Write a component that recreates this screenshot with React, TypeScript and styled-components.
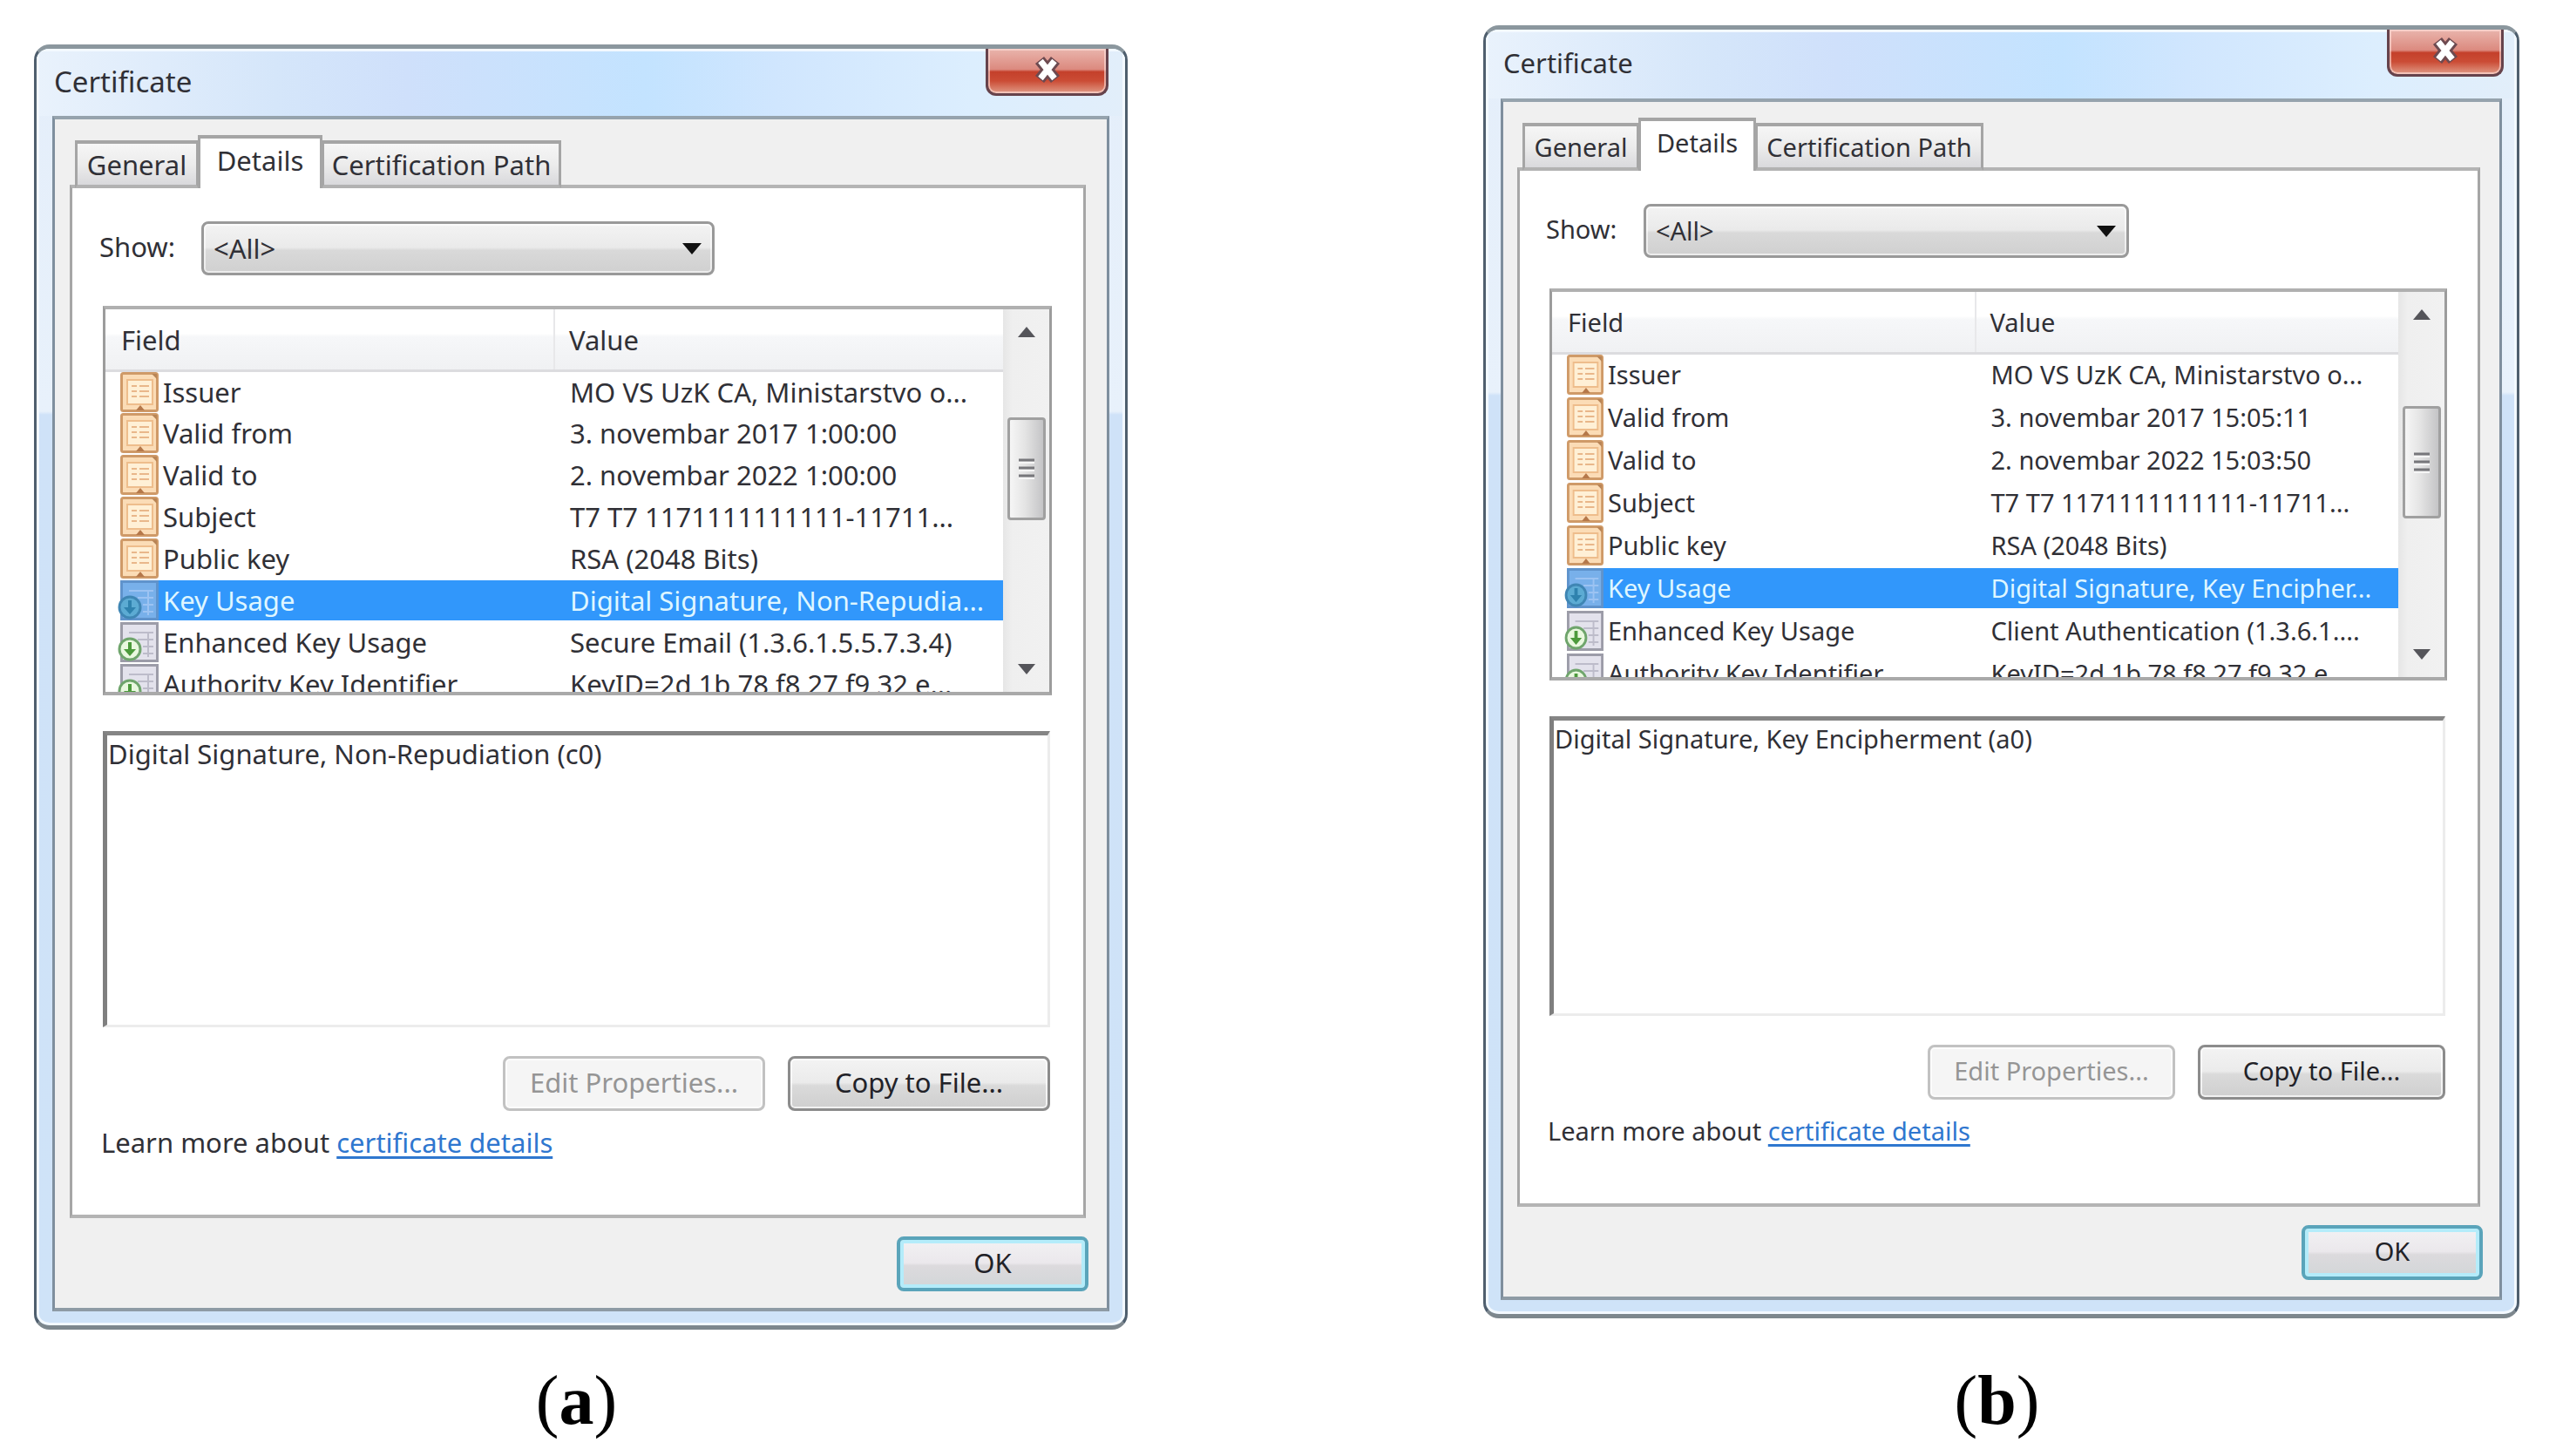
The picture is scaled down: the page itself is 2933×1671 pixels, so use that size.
import React from "react";
import styled, { createGlobalStyle, css, ThemeProvider } from "styled-components";

const regular = {
  title: 33,
  text: 31,
  row: 48,
  icon: 44,
  titleBar: "77px",
  titleBarSides: "19px",
  frameSide: "18px",
  clientPadding: "18px 24px 19px 17px",
  pagePadding: "38px 38px 61px 31px",
  label: 117,
  listHeight: 447,
  noteHeight: 340,
  button: 301,
  ok: 220,
  close: 141,
  tabs: [142, 143, 275],
  thumbTop: 75,
  thumbHeight: 118,
};

const compact: typeof regular = {
  title: 31,
  text: 29,
  row: 49,
  icon: 42,
  titleBar: "79px",
  titleBarSides: "15px",
  frameSide: "17px",
  clientPadding: "18px 22px 19px 16px",
  pagePadding: "38px 37px 61px 30px",
  label: 112,
  listHeight: 450,
  noteHeight: 344,
  button: 284,
  ok: 208,
  close: 134,
  tabs: [134, 135, 262],
  thumbTop: 82,
  thumbHeight: 129,
};

const GlobalStyle = createGlobalStyle`
  *, *::before, *::after { box-sizing: border-box; }
  body {
    margin: 0;
    background: #fff;
    color: #303036;
    font-family: "Noto Sans", "Open Sans", sans-serif;
  }
  button, select, textarea { font: inherit; color: inherit; margin: 0; }
`;

const Page = styled.main`
  display: grid;
  grid-template-columns: minmax(0, 1255fr) minmax(0, 1189fr);
  column-gap: 408px;
  padding: 29px 42px 0 39px;
`;

const Figure = styled.figure<{ $drop: number }>`
  display: flex;
  flex-direction: column;
  margin: 0;
  padding-top: ${(p) => p.$drop}px;
`;

const Caption = styled.figcaption`
  margin-top: auto;
  padding: 35px 10px 0 0;
  color: #000;
  font-family: "Liberation Serif", serif;
  font-size: 80px;
  line-height: 92px;
  text-align: center;
`;

const Frame = styled.section`
  padding: 0 ${(p) => p.theme.frameSide} 16px;
  border: solid;
  border-width: 5px 3px;
  border-color: #8b979e #4f5f6e #7d878d;
  border-radius: 18px;
  background: linear-gradient(#e4eefa 0, #e8f1fb 416px, #cfe2f8 420px, #cfe3f8 100%);
  box-shadow: inset 0 0 0 3px #f3f9ff;
  font-size: ${(p) => p.theme.text}px;
  line-height: 40px;
  overflow: hidden;
`;

const TitleBar = styled.header`
  display: flex;
  align-items: flex-start;
  justify-content: space-between;
  height: ${(p) => p.theme.titleBar};
  margin: 0 -${(p) => p.theme.frameSide};
  padding: 0 ${(p) => p.theme.titleBarSides} 0 20px;
  background: linear-gradient(90deg, #e9f2fc 0, #d5e6fa 22%, #cfe0fb 34%, #c3e3ff 56%, #d0e6fe 68%, #dceefe 86%, #e2eefa 100%);
  box-shadow: inset 3px 3px 0 #f3f9ff, inset -3px 0 0 #f3f9ff;
`;

const Title = styled.h2`
  margin: 0;
  font-size: ${(p) => p.theme.title}px;
  font-weight: 400;
  line-height: 76px;
`;

const CloseButton = styled.button`
  display: grid;
  place-items: center;
  width: ${(p) => p.theme.close}px;
  height: 54px;
  padding: 0 0 4px;
  border: 3px solid #66434c;
  border-top: 0;
  border-radius: 0 0 12px 12px;
  background: linear-gradient(#e9b5ad 0, #dc8a7f 46%, #c4402b 52%, #cb4c35 72%, #e09a86 100%);
  box-shadow: inset 0 0 0 2px rgba(255, 225, 220, 0.6);
`;

const Client = styled.div`
  padding: ${(p) => p.theme.clientPadding};
  border: solid #7f8f9e;
  border-width: 4px 3px;
  border-top-color: #96a3ad;
  border-bottom-color: #8e9ba5;
  background: #f0f0f0;
`;

const TabStrip = styled.div`
  display: flex;
  align-items: flex-end;
  margin-bottom: -4px;
  padding-left: 6px;
`;

const Tab = styled.button<{ $slot: number; $selected?: boolean }>`
  width: ${(p) => p.theme.tabs[p.$slot]}px;
  padding: 0;
  border: solid #a5a5a5;
  border-width: 4px 3px;
  white-space: nowrap;
  ${(p) =>
    p.$selected
      ? css`
          position: relative;
          height: 61px;
          padding-bottom: 8px;
          border-bottom: 0;
          background: #fff;
        `
      : css`
          height: 55px;
          border-bottom-color: #b2b2b2;
          background: linear-gradient(#f6f6f6, #ececec 50%, #d9d9dc);
        `}
  & + & { margin-left: -1px; }
`;

const TabPage = styled.div`
  padding: ${(p) => p.theme.pagePadding};
  border: solid #a6a6a6;
  border-width: 4px 3px;
  border-top-color: #b4b4b4;
  border-bottom-color: #b4b4b4;
  background: #fff;
`;

const ShowRow = styled.div`
  display: flex;
  align-items: center;
  margin-bottom: 35px;
`;

const ShowLabel = styled.label`
  flex: none;
  width: ${(p) => p.theme.label}px;
  padding-bottom: 4px;
`;

const SelectBox = styled.div`
  position: relative;
  width: 54%;
`;

const Select = styled.select`
  appearance: none;
  display: block;
  width: 100%;
  height: 62px;
  padding: 0 48px 0 11px;
  border: 3px solid #999;
  border-radius: 8px;
  background: linear-gradient(#f3f3f3 0, #eaeaea 48%, #d9d9d9 54%, #d0d0d0 100%);
  box-shadow: inset 0 0 0 2px rgba(255, 255, 255, 0.6);
`;

const SelectArrow = styled.svg`
  position: absolute;
  top: 25px;
  right: 15px;
  width: 22px;
  height: 13px;
  pointer-events: none;
`;

const List = styled.div`
  display: flex;
  height: ${(p) => p.theme.listHeight}px;
  margin-right: -2px;
  margin-left: 4px;
  border: solid #9c9c9c;
  border-width: 4px 3px;
  border-top-color: #b0b0b0;
  border-bottom-color: #a9a9a9;
  overflow: hidden;
`;

const Table = styled.table`
  flex: 1;
  width: 0;
  height: max-content;
  table-layout: fixed;
  border-collapse: collapse;
`;

const HeadCell = styled.th`
  height: 70px;
  padding: 2px 18px 0;
  border-bottom: 3px solid #dcdcdf;
  background: linear-gradient(#fff 0, #fff 40%, #f6f7f9 46%, #f0f1f3 100%);
  font-weight: 400;
  text-align: left;
  & + & {
    border-left: 2px solid #e8e8ea;
    padding-left: 16px;
  }
`;

const fill = css<{ $selected?: boolean }>`
  height: 46px;
  line-height: 46px;
  white-space: nowrap;
  overflow: hidden;
  ${(p) =>
    p.$selected &&
    css`
      background: #3197fb;
      color: #dff6ff;
    `}
`;

const FieldCell = styled.td`
  height: ${(p) => p.theme.row}px;
  padding: 0;
`;

const FieldInner = styled.div`
  display: flex;
  align-items: center;
  padding-left: 17px;
`;

const FieldName = styled.span<{ $selected?: boolean }>`
  ${fill}
  flex: 1;
  padding-left: 5px;
`;

const ValueCell = styled.td`
  padding: 0;
`;

const ValueText = styled.div<{ $selected?: boolean }>`
  ${fill}
  padding-left: 18px;
`;

const RowIcon = styled.svg`
  flex: none;
  width: ${(p) => p.theme.icon}px;
  height: 46px;
  overflow: visible;
`;

const ScrollBar = styled.div`
  display: flex;
  flex-direction: column;
  align-items: center;
  width: 53px;
  padding: 3px 0;
  background: linear-gradient(90deg, #e6e6e6, #efefef 20%, #f1f1f1);
`;

const ScrollButton = styled.button`
  display: grid;
  place-items: center;
  width: 44px;
  height: 46px;
  padding: 0;
  border: 0;
  background: none;
`;

const Thumb = styled.div`
  display: grid;
  place-items: center;
  width: 44px;
  height: ${(p) => p.theme.thumbHeight}px;
  margin-top: ${(p) => p.theme.thumbTop}px;
  margin-bottom: auto;
  border: 3px solid #a0a0a0;
  border-radius: 4px;
  background: linear-gradient(90deg, #f6f6f6, #e4e4e4 45%, #c4c4c6);
`;

const Note = styled.textarea`
  display: block;
  width: calc(100% - 4px);
  height: ${(p) => p.theme.noteHeight}px;
  margin: 41px 0 33px 4px;
  padding: 1px;
  border: solid;
  border-width: 5px 3px 3px 5px;
  border-color: #858585 #ececec #ececec #7f7f7f;
  border-radius: 0;
  background: #fff;
  resize: none;
  outline: 0;
  overflow: hidden;
`;

const ButtonRow = styled.div`
  display: flex;
  justify-content: flex-end;
  gap: 26px;
`;

const PushButton = styled.button`
  width: ${(p) => p.theme.button}px;
  height: 63px;
  padding: 0 0 4px;
  border: 3px solid #8c8c8c;
  border-radius: 8px;
  background: linear-gradient(#f3f3f3 0, #ebebeb 48%, #dadada 54%, #cfcfcf 100%);
  box-shadow: inset 0 0 0 2px rgba(255, 255, 255, 0.7);
  color: #222228;
  white-space: nowrap;
  &:disabled {
    border-color: #c2c2c2;
    background: #f5f5f5;
    color: #959595;
  }
`;

const OkButton = styled(PushButton)`
  width: ${(p) => p.theme.ok}px;
  border: 4px solid #5aa4ba;
  background: linear-gradient(#f2f1f3 0, #ebe8ec 48%, #dcdadd 54%, #d2d6d8 100%);
  box-shadow: inset 0 0 0 4px #b4ecfa;
`;

const Footer = styled.div`
  display: flex;
  justify-content: flex-end;
  margin: 21px -3px 0 0;
`;

const LearnMore = styled.p`
  margin: 0;
  padding: 16px 0 2px 2px;
`;

const Link = styled.a`
  color: #2f77cf;
  text-decoration: underline;
  text-decoration-thickness: 3px;
  text-underline-offset: 4px;
`;

const CloseMark = () => (
  <svg width="34" height="32" viewBox="0 0 34 32" fill="none" aria-hidden="true">
    <path d="M8 5l18 22M26 5L8 27" stroke="#6d4a50" strokeWidth="13" />
    <path d="M9 6l16 20M25 6L9 26" stroke="#fff" strokeWidth="7" />
  </svg>
);

const ScrollArrow = ({ down }: { down?: boolean }) => (
  <svg width="20" height="12" viewBox="0 0 20 12" aria-hidden="true">
    <path d={down ? "M0 0h20L10 12z" : "M10 0l10 12H0z"} fill="#55555a" />
  </svg>
);

const Grip = () => (
  <svg width="18" height="24" viewBox="0 0 18 24" aria-hidden="true">
    <path d="M0 2h18M0 11h18M0 20h18" stroke="#77777b" strokeWidth="3" />
    <path d="M0 5h18M0 14h18M0 23h18" stroke="#f6f6f6" strokeWidth="2" />
  </svg>
);

const CertificateIcon = () => (
  <RowIcon viewBox="0 0 44 46" preserveAspectRatio="none" aria-hidden="true">
    <rect x="1.5" y="1.5" width="41" height="43" rx="2" fill="#fbdcb6" stroke="#cf9a68" strokeWidth="3" />
    <path d="M36 2h6v6z" fill="#b98556" />
    <rect x="8" y="9" width="29" height="28" fill="#fff0d6" stroke="#eebd8c" strokeWidth="2" />
    <path d="M13 16h6M22 16h11M13 22h6M22 22h11M13 28h6M22 28h11" stroke="#e9b78a" strokeWidth="2" />
    <path d="M18 44l5-6 5 6z" fill="#b5784a" />
  </RowIcon>
);

const ExtensionIcon = ({ selected }: { selected?: boolean }) => (
  <RowIcon viewBox="0 0 44 46" preserveAspectRatio="none" aria-hidden="true">
    <rect
      x="1.5"
      y="1.5"
      width="41"
      height="43"
      fill={selected ? "#78b0ea" : "#e3e2ec"}
      stroke={selected ? "#5f93cc" : "#9c9ca8"}
      strokeWidth="3"
    />
    <path
      d="M10 12h28M20 20h18M26 28h12M26 36h12M32 12v28"
      stroke={selected ? "#9cc3f2" : "#bdbcca"}
      strokeWidth="2"
    />
    <circle
      cx="11"
      cy="31"
      r="12"
      fill={selected ? "#5cabd3" : "#e9f8df"}
      stroke={selected ? "#3f86b4" : "#6fa56c"}
      strokeWidth="3"
    />
    <path d="M9 23h4v8h5l-7 8-7-8h5z" fill={selected ? "#2f82ae" : "#4c9a3c"} />
  </RowIcon>
);

type Entry = { name: string; value: string; kind: "basic" | "extension"; selected?: boolean };

type Certificate = {
  id: string;
  theme: typeof regular;
  drop: number;
  note: string;
  entries: Entry[];
};

const certificates: Certificate[] = [
  {
    id: "a",
    theme: regular,
    drop: 22,
    note: "Digital Signature, Non-Repudiation (c0)",
    entries: [
      { name: "Issuer", value: "MO VS UzK CA, Ministarstvo o...", kind: "basic" },
      { name: "Valid from", value: "3. novembar 2017 1:00:00", kind: "basic" },
      { name: "Valid to", value: "2. novembar 2022 1:00:00", kind: "basic" },
      { name: "Subject", value: "T7 T7 1171111111111-11711...", kind: "basic" },
      { name: "Public key", value: "RSA (2048 Bits)", kind: "basic" },
      { name: "Key Usage", value: "Digital Signature, Non-Repudia...", kind: "extension", selected: true },
      { name: "Enhanced Key Usage", value: "Secure Email (1.3.6.1.5.5.7.3.4)", kind: "extension" },
      { name: "Authority Key Identifier", value: "KeyID=2d 1b 78 f8 27 f9 32 e...", kind: "extension" },
    ],
  },
  {
    id: "b",
    theme: compact,
    drop: 0,
    note: "Digital Signature, Key Encipherment (a0)",
    entries: [
      { name: "Issuer", value: "MO VS UzK CA, Ministarstvo o...", kind: "basic" },
      { name: "Valid from", value: "3. novembar 2017 15:05:11", kind: "basic" },
      { name: "Valid to", value: "2. novembar 2022 15:03:50", kind: "basic" },
      { name: "Subject", value: "T7 T7 1171111111111-11711...", kind: "basic" },
      { name: "Public key", value: "RSA (2048 Bits)", kind: "basic" },
      { name: "Key Usage", value: "Digital Signature, Key Encipher...", kind: "extension", selected: true },
      { name: "Enhanced Key Usage", value: "Client Authentication (1.3.6.1....", kind: "extension" },
      { name: "Authority Key Identifier", value: "KeyID=2d 1b 78 f8 27 f9 32 e...", kind: "extension" },
    ],
  },
];

const FieldList = ({ entries }: { entries: Entry[] }) => (
  <List>
    <Table>
      <thead>
        <tr>
          <HeadCell scope="col">Field</HeadCell>
          <HeadCell scope="col">Value</HeadCell>
        </tr>
      </thead>
      <tbody>
        {entries.map((entry) => (
          <tr key={entry.name}>
            <FieldCell>
              <FieldInner>
                {entry.kind === "basic" ? <CertificateIcon /> : <ExtensionIcon selected={entry.selected} />}
                <FieldName $selected={entry.selected}>{entry.name}</FieldName>
              </FieldInner>
            </FieldCell>
            <ValueCell>
              <ValueText $selected={entry.selected}>{entry.value}</ValueText>
            </ValueCell>
          </tr>
        ))}
      </tbody>
    </Table>
    <ScrollBar>
      <ScrollButton type="button" aria-label="Scroll up">
        <ScrollArrow />
      </ScrollButton>
      <Thumb>
        <Grip />
      </Thumb>
      <ScrollButton type="button" aria-label="Scroll down">
        <ScrollArrow down />
      </ScrollButton>
    </ScrollBar>
  </List>
);

const CertificateDialog = ({ id, note, entries }: Pick<Certificate, "id" | "note" | "entries">) => (
  <Frame aria-labelledby={`title-${id}`}>
    <TitleBar>
      <Title id={`title-${id}`}>Certificate</Title>
      <CloseButton type="button" aria-label="Close">
        <CloseMark />
      </CloseButton>
    </TitleBar>
    <Client>
      <TabStrip role="tablist">
        <Tab type="button" role="tab" $slot={0}>General</Tab>
        <Tab type="button" role="tab" aria-selected="true" $slot={1} $selected>Details</Tab>
        <Tab type="button" role="tab" $slot={2}>Certification Path</Tab>
      </TabStrip>
      <TabPage role="tabpanel">
        <ShowRow>
          <ShowLabel htmlFor={`show-${id}`}>Show:</ShowLabel>
          <SelectBox>
            <Select id={`show-${id}`}>
              <option>&lt;All&gt;</option>
            </Select>
            <SelectArrow viewBox="0 0 22 13" aria-hidden="true">
              <path d="M0 0h22L11 13z" fill="#111" />
            </SelectArrow>
          </SelectBox>
        </ShowRow>
        <FieldList entries={entries} />
        <Note aria-label="Field value" readOnly value={note} />
        <ButtonRow>
          <PushButton type="button" disabled>Edit Properties...</PushButton>
          <PushButton type="button">Copy to File...</PushButton>
        </ButtonRow>
        <LearnMore>
          Learn more about <Link href="#details">certificate details</Link>
        </LearnMore>
      </TabPage>
      <Footer>
        <OkButton type="button">OK</OkButton>
      </Footer>
    </Client>
  </Frame>
);

export default function App() {
  return (
    <>
      <GlobalStyle />
      <Page>
        {certificates.map(({ id, theme, drop, note, entries }) => (
          <ThemeProvider theme={theme} key={id}>
            <Figure $drop={drop}>
              <CertificateDialog id={id} note={note} entries={entries} />
              <Caption>
                (<b>{id}</b>)
              </Caption>
            </Figure>
          </ThemeProvider>
        ))}
      </Page>
    </>
  );
}
